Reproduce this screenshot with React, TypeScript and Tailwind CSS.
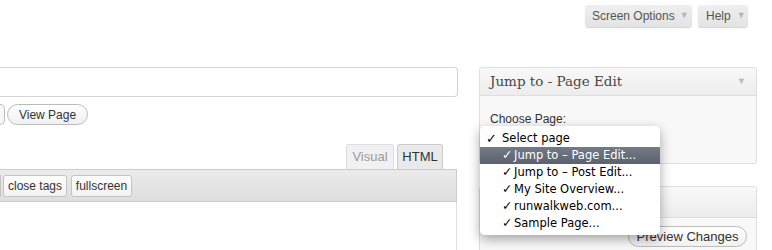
export default function App() {
  const pages = [
    'Jump to – Page Edit...',
    'Jump to – Post Edit...',
    'My Site Overview...',
    'runwalkweb.com...',
    'Sample Page...',
  ]

  return (
    <div className="relative w-[772px] h-[250px] overflow-hidden bg-white font-['Liberation_Sans',Arial,sans-serif] text-[12px] text-[#333]">
      {/* screen meta links */}
      <div className="flex justify-end gap-[6px] pr-[24px] pt-[5px]">
        <div className="flex items-center h-[22px] w-[107px] pl-[7px] rounded-[3px] bg-gradient-to-b from-[#efefef] to-[#e3e3e3] shadow-[0_1px_1px_rgba(0,0,0,0.18)] text-[#555]">
          Screen Options <span className="ml-[5px] text-[9px] text-[#b5b5b5]">▼</span>
        </div>
        <div className="flex items-center h-[22px] w-[50px] pl-[8px] rounded-[3px] bg-gradient-to-b from-[#efefef] to-[#e3e3e3] shadow-[0_1px_1px_rgba(0,0,0,0.18)] text-[#555]">
          Help <span className="ml-[6px] text-[9px] text-[#b5b5b5]">▼</span>
        </div>
      </div>

      <div className="flex mt-[40px]">
        {/* editor column */}
        <div className="w-[458px] flex flex-col">
          <div className="h-[30px] border border-l-0 border-[#d4d4d4] rounded-r-[4px] bg-white" />
          <div className="flex items-center mt-[7px] h-[21px]">
            <div className="h-[21px] w-[5px] border border-l-0 border-[#bbb] rounded-r-full bg-[#f7f7f7]" />
            <div className="ml-[2px] h-[21px] w-[81px] flex items-center justify-center border border-[#bbb] rounded-full bg-gradient-to-b from-white to-[#f0f0f0] text-[#333]">
              View Page
            </div>
          </div>
          <div className="flex justify-end gap-[3px] pr-[15px] mt-[19px]">
            <div className="h-[25px] w-[48px] flex items-center justify-center border border-b-0 border-[#dfdfdf] rounded-t-[3px] bg-[#f1f1f1] text-[13px] text-[#999]">
              Visual
            </div>
            <div className="h-[25px] w-[46px] flex items-center justify-center border border-b-0 border-[#ccc] rounded-t-[3px] bg-[#e9e9e9] text-[13px] text-[#333]">
              HTML
            </div>
          </div>
          <div className="h-[33px] w-[457px] flex items-center border border-l-0 border-[#ccc] bg-gradient-to-b from-[#ebebeb] to-[#dedede]">
            <div className="h-[22px] w-[1px] border-r border-[#c3c3c3]" />
            <div className="ml-[2px] h-[22px] w-[64px] flex items-center justify-center border border-[#c3c3c3] rounded-[3px] bg-gradient-to-b from-[#fefefe] to-[#f2f2f2]">
              close tags
            </div>
            <div className="ml-[4px] h-[22px] w-[61px] flex items-center justify-center border border-[#c3c3c3] rounded-[3px] bg-gradient-to-b from-[#fefefe] to-[#f2f2f2]">
              fullscreen
            </div>
          </div>
          <div className="h-[60px] w-[457px] border-r border-[#dfdfdf] bg-white" />
        </div>

        {/* sidebar */}
        <div className="ml-[21px] w-[278px] flex flex-col">
          <div className="h-[97px] border border-[#dfdfdf] rounded-[3px] bg-[#f8f8f8] flex flex-col">
            <div className="h-[28px] flex items-center justify-between px-[10px] border-b border-[#dfdfdf] bg-gradient-to-b from-[#f9f9f9] to-[#ececec] rounded-t-[3px]">
              <span className="font-['DejaVu_Serif',Georgia,serif] text-[13.5px] text-[#464646]">Jump to - Page Edit</span>
              <span className="text-[9px] text-[#bbb]">▼</span>
            </div>
            <div className="pl-[10px] pt-[14px] text-[#333]">Choose Page:</div>
          </div>
          <div className="mt-[22px] h-[80px] border border-[#dfdfdf] rounded-[3px] bg-[#f8f8f8]">
            <div className="h-[31px] border-b border-[#dfdfdf] bg-gradient-to-b from-[#f9f9f9] to-[#ececec] rounded-t-[3px]" />
            <div className="flex justify-end pr-[9px] pt-[8px]">
              <div className="h-[21px] w-[119px] flex items-center justify-center border border-[#bbb] rounded-full bg-gradient-to-b from-white to-[#f0f0f0] text-[13px] text-[#333]">
                Preview Changes
              </div>
            </div>
          </div>
        </div>
      </div>

      {/* open select menu */}
      <div className="absolute left-[480px] top-[126px] w-[180px] h-[109px] py-[4px] rounded-[5px] bg-white/95 shadow-[0_4px_12px_rgba(0,0,0,0.35)] font-['DejaVu_Sans',sans-serif] text-[11.5px] text-black">
        <div className="h-[17px] flex items-center pl-[6px]">
          <span className="w-[16px] text-[13px] leading-none">✓</span>
          <span>Select page</span>
        </div>
        {pages.map((item, index) => (
          <div
            key={index}
            className={
              index === 0
                ? 'h-[17px] flex items-center pl-[22px] bg-gradient-to-b from-[#747b88] to-[#5b626e] text-white'
                : 'h-[17px] flex items-center pl-[22px]'
            }
          >
            <span className="w-[12px] text-[12.5px] leading-none">✓</span>
            <span>{item}</span>
          </div>
        ))}
      </div>
    </div>
  )
}
